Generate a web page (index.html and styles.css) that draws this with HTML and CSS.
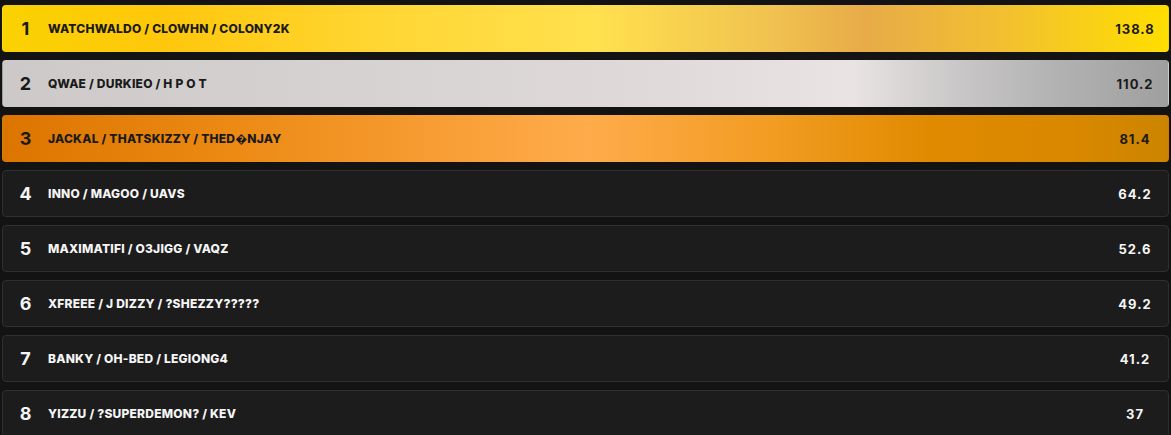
FILE: index.html
```html
<!DOCTYPE html>
<html lang="en">
<head>
<meta charset="utf-8">
<title>Leaderboard</title>
<link rel="stylesheet" href="styles.css">
</head>
<body>
<div class="board">
  <div class="row gold"><span class="rank">1</span><span class="name">WATCHWALDO / CLOWHN / COLONY2K</span><span class="score">138.8</span></div>
  <div class="row silver"><span class="rank">2</span><span class="name">QWAE / DURKIEO / H P O T</span><span class="score">110.2</span></div>
  <div class="row bronze"><span class="rank">3</span><span class="name">JACKAL / THATSKIZZY / THED&#xFFFD;NJAY</span><span class="score">81.4</span></div>
  <div class="row"><span class="rank">4</span><span class="name">INNO / MAGOO / UAVS</span><span class="score">64.2</span></div>
  <div class="row"><span class="rank">5</span><span class="name">MAXIMATIFI / O3JIGG / VAQZ</span><span class="score">52.6</span></div>
  <div class="row"><span class="rank">6</span><span class="name">XFREEE / J DIZZY / ?SHEZZY?????</span><span class="score">49.2</span></div>
  <div class="row"><span class="rank">7</span><span class="name">BANKY / OH-BED / LEGIONG4</span><span class="score">41.2</span></div>
  <div class="row"><span class="rank">8</span><span class="name">YIZZU / ?SUPERDEMON? / KEV</span><span class="score">37</span></div>
</div>
</body>
</html>
```
FILE: styles.css
```css
html, body {
  margin: 0;
  padding: 0;
  background: #131313;
  overflow: hidden;
}
body {
  font-family: Inter, "Noto Sans", sans-serif;
  color: #f5f5f5;
}
.board {
  display: flex;
  flex-direction: column;
  gap: 8px;
  padding: 5px 2px 0 2px;
}
.row {
  display: flex;
  align-items: center;
  height: 47px;
  box-sizing: border-box;
  border: 1px solid #2f2f2f;
  border-radius: 4px;
  background: #1c1c1c;
}
.rank {
  width: 45px;
  text-align: center;
  font-size: 18px;
  font-weight: 700;
}
.name {
  flex: 1;
  font-size: 12px;
  font-weight: 800;
  letter-spacing: 0.22px;
}
.score {
  width: 52px;
  margin-right: 7px;
  text-align: center;
  font-size: 13px;
  font-weight: 700;
  letter-spacing: 1px;
}
.gold, .silver, .bronze {
  color: #1a1a1a;
  border-color: transparent;
}
.gold {
  background: linear-gradient(90deg, #fad200 0%, #ffc70c 14%, #ffd838 35%, #ffe04e 51%, #f0c250 66%, #e8ab48 74%, #f2c030 86%, #ffde00 100%);
}
.silver {
  background: linear-gradient(90deg, #cdc9c9 0%, #d6d2d1 30%, #dfdad9 55%, #e9e3e3 73%, #c9c7c7 82%, #b4b3b3 90%, #9f9f9f 100%);
}
.bronze {
  background: linear-gradient(90deg, #dc7500 0%, #ec8a14 20%, #ffab4b 50%, #f29c22 66%, #e08a00 80%, #d98800 92%, #cc8400 100%);
}
```
